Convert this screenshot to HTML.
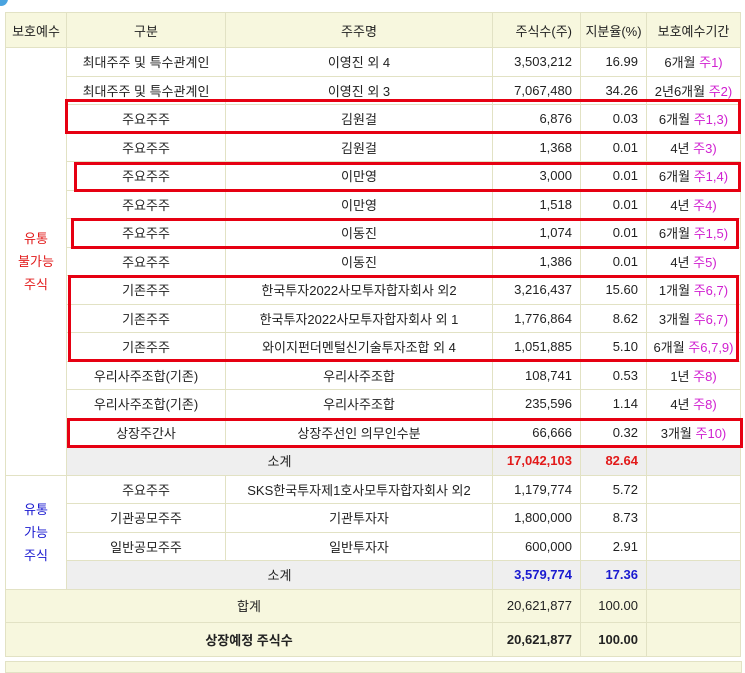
<!DOCTYPE html>
<html><head><meta charset="utf-8"><style>
body{margin:0;width:745px;height:665px;background:#fff;position:relative;overflow:hidden;font-family:"Liberation Sans","Noto Sans CJK KR",sans-serif;font-size:13px;color:#222}
table{position:absolute;left:5px;top:12px;border-collapse:collapse;table-layout:fixed;width:735px}
td{border:1px solid #e2e2c4;text-align:center;padding:0 4px;height:27.5px;white-space:nowrap;overflow:hidden}
tr.h td{background:#f7f7de;height:34px}
td.r{text-align:right;padding-right:8px}
.g{background:#efefef}
.y td{background:#f7f7de}
.p{color:#d020d0}
.red{color:#e21a1a}.blue{color:#1a1ad0}
.box{position:absolute;border:3px solid #e60012;box-sizing:border-box}
</style></head><body>
<div style="position:absolute;left:-6px;top:-8px;width:14px;height:14px;border-radius:50%;background:#4aa3df"></div>
<table>
<colgroup><col style="width:61px"><col style="width:159px"><col style="width:267px"><col style="width:88px"><col style="width:66px"><col style="width:94px"></colgroup>
<tr class="h"><td>보호예수</td><td>구분</td><td>주주명</td><td class="r">주식수(주)</td><td>지분율(%)</td><td>보호예수기간</td></tr>
<tr><td rowspan="15" class="red" style="line-height:23px">유통<br>불가능<br>주식</td><td>최대주주 및 특수관계인</td><td>이영진 외 4</td><td class="r">3,503,212</td><td class="r">16.99</td><td>6개월 <span class="p">주1)</span></td></tr>
<tr><td>최대주주 및 특수관계인</td><td>이영진 외 3</td><td class="r">7,067,480</td><td class="r">34.26</td><td>2년6개월 <span class="p">주2)</span></td></tr>
<tr><td>주요주주</td><td>김원걸</td><td class="r">6,876</td><td class="r">0.03</td><td>6개월 <span class="p">주1,3)</span></td></tr>
<tr><td>주요주주</td><td>김원걸</td><td class="r">1,368</td><td class="r">0.01</td><td>4년 <span class="p">주3)</span></td></tr>
<tr><td>주요주주</td><td>이만영</td><td class="r">3,000</td><td class="r">0.01</td><td>6개월 <span class="p">주1,4)</span></td></tr>
<tr><td>주요주주</td><td>이만영</td><td class="r">1,518</td><td class="r">0.01</td><td>4년 <span class="p">주4)</span></td></tr>
<tr><td>주요주주</td><td>이동진</td><td class="r">1,074</td><td class="r">0.01</td><td>6개월 <span class="p">주1,5)</span></td></tr>
<tr><td>주요주주</td><td>이동진</td><td class="r">1,386</td><td class="r">0.01</td><td>4년 <span class="p">주5)</span></td></tr>
<tr><td>기존주주</td><td>한국투자2022사모투자합자회사 외2</td><td class="r">3,216,437</td><td class="r">15.60</td><td>1개월 <span class="p">주6,7)</span></td></tr>
<tr><td>기존주주</td><td>한국투자2022사모투자합자회사 외 1</td><td class="r">1,776,864</td><td class="r">8.62</td><td>3개월 <span class="p">주6,7)</span></td></tr>
<tr><td>기존주주</td><td>와이지펀더멘털신기술투자조합 외 4</td><td class="r">1,051,885</td><td class="r">5.10</td><td>6개월 <span class="p">주6,7,9)</span></td></tr>
<tr><td>우리사주조합(기존)</td><td>우리사주조합</td><td class="r">108,741</td><td class="r">0.53</td><td>1년 <span class="p">주8)</span></td></tr>
<tr><td>우리사주조합(기존)</td><td>우리사주조합</td><td class="r">235,596</td><td class="r">1.14</td><td>4년 <span class="p">주8)</span></td></tr>
<tr><td>상장주간사</td><td>상장주선인 의무인수분</td><td class="r">66,666</td><td class="r">0.32</td><td>3개월 <span class="p">주10)</span></td></tr>
<tr><td colspan="2" class="g">소계</td><td class="r g red"><b>17,042,103</b></td><td class="r g red"><b>82.64</b></td><td class="g"></td></tr>
<tr><td rowspan="4" class="blue" style="line-height:23px">유통<br>가능<br>주식</td><td>주요주주</td><td>SKS한국투자제1호사모투자합자회사 외2</td><td class="r">1,179,774</td><td class="r">5.72</td><td></td></tr>
<tr><td>기관공모주주</td><td>기관투자자</td><td class="r">1,800,000</td><td class="r">8.73</td><td></td></tr>
<tr><td>일반공모주주</td><td>일반투자자</td><td class="r">600,000</td><td class="r">2.91</td><td></td></tr>
<tr><td colspan="2" class="g">소계</td><td class="r g blue"><b>3,579,774</b></td><td class="r g blue"><b>17.36</b></td><td class="g"></td></tr>
<tr class="y"><td colspan="3" style="height:32px">합계</td><td class="r">20,621,877</td><td class="r">100.00</td><td></td></tr>
<tr class="y"><td colspan="3" style="height:33px"><b>상장예정 주식수</b></td><td class="r"><b>20,621,877</b></td><td class="r"><b>100.00</b></td><td></td></tr>
</table>
<div style="position:absolute;left:5px;top:661px;width:735px;height:10px;background:#f7f7de;border:1px solid #e2e2c4"></div>
<div class="box" style="left:65px;top:99px;width:676px;height:35px"></div>
<div class="box" style="left:74px;top:162px;width:667px;height:30px"></div>
<div class="box" style="left:71px;top:218px;width:668px;height:31px"></div>
<div class="box" style="left:68px;top:275px;width:671px;height:87px"></div>
<div class="box" style="left:67px;top:418px;width:676px;height:30px"></div>
</body></html>
